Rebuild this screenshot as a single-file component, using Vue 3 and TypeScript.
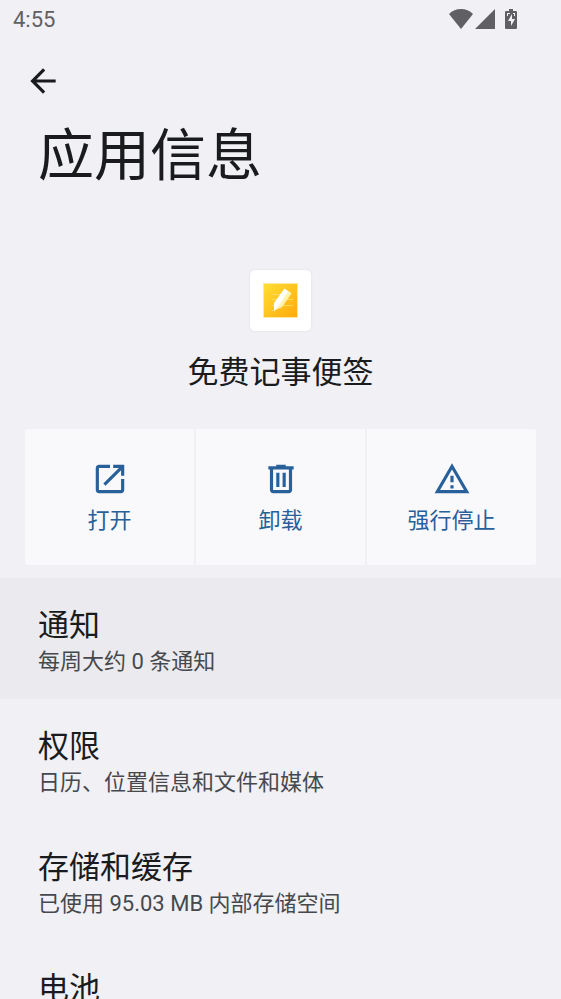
<script setup lang="ts">
interface Action {
  id: string
  label: string
  path: string
}

interface Entry {
  title: string
  summary?: string
  pressed?: boolean
}

const actions: Action[] = [
  {
    id: 'open',
    label: '打开',
    path: 'M19 19H5V5h7V3H5c-1.1 0-2 .9-2 2v14c0 1.1.9 2 2 2h14c1.1 0 2-.9 2-2v-7h-2v7zM14 3v2h3.59l-9.83 9.83 1.41 1.41L19 6.41V10h2V3h-7z',
  },
  {
    id: 'uninstall',
    label: '卸载',
    path: 'M15 4V3H9v1H4v2h1v13c0 1.1.9 2 2 2h10c1.1 0 2-.9 2-2V6h1V4h-5zm2 15H7V6h10v13zM9 8h2v9H9zm4 0h2v9h-2z',
  },
  {
    id: 'stop',
    label: '强行停止',
    path: 'M12 5.99L19.53 19H4.47L12 5.99M12 2L1 21h22L12 2zm1 14h-2v2h2v-2zm0-6h-2v4h2v-4z',
  },
]

const entries: Entry[] = [
  { title: '通知', summary: '每周大约 0 条通知', pressed: true },
  { title: '权限', summary: '日历、位置信息和文件和媒体' },
  { title: '存储和缓存', summary: '已使用 95.03 MB 内部存储空间' },
  { title: '电池' },
]
</script>

<template>
  <div class="screen">
    <div class="status">
      <span>4:55</span>
      <div class="status-icons">
        <svg class="wifi" viewBox="0 0 24 20" aria-hidden="true">
          <path d="M12 20 0 5Q5 0 12 0t12 5z" />
        </svg>
        <svg class="signal" viewBox="0 0 20 20" aria-hidden="true"><path d="M20 0v20H0z" /></svg>
        <svg class="battery" viewBox="0 0 12 20" aria-hidden="true">
          <path fill-rule="evenodd" d="M4 0h4v2h3q1 0 1 1v16q0 1-1 1H1q-1 0-1-1V3q0-1 1-1h3zM7 5 3 12h3v5l4-7H7zM2 4v3h1V5h2V4zm6 0v1h1v2h1V4z" />
        </svg>
      </div>
    </div>

    <header>
      <button class="back" type="button" aria-label="返回">
        <svg class="icon" viewBox="0 0 24 24" aria-hidden="true">
          <path d="M20 11H7.83l5.59-5.59L12 4l-8 8 8 8 1.41-1.41L7.83 13H20v-2z" />
        </svg>
      </button>
      <h1>应用信息</h1>
    </header>

    <main>
      <section class="app">
        <div class="app-icon">
          <svg viewBox="0 0 35 35" aria-hidden="true">
            <defs>
              <linearGradient id="note" x1="0" y1="0" x2="1" y2="1">
                <stop offset="0" stop-color="#ffdf32" />
                <stop offset="1" stop-color="#ffa90d" />
              </linearGradient>
            </defs>
            <rect width="35" height="35" fill="#ffe9a0" />
            <rect x="1" y="1" width="33" height="33" fill="url(#note)" />
            <path d="M9 11.500h15M9 16.500h21M9 22.500h21M9 27.500h3" stroke="#ffdc60" />
            <path d="M5 11.500h2M5 16.500h2M5 22.500h2M5 27.500h2" stroke="#ffc51c" />
            <path d="M21.500 5.500 28 10 18.500 24 11 27.500V20z" fill="#fff" />
            <path d="m25 8.500 3.500 2L19 24l-8 3.500 5-5z" fill="#fff2ad" />
          </svg>
        </div>
        <h2>免费记事便签</h2>
      </section>

      <div class="actions">
        <button v-for="action in actions" :key="action.id" type="button">
          <svg class="icon" viewBox="0 0 24 24" aria-hidden="true"><path :d="action.path" /></svg>
          <span>{{ action.label }}</span>
        </button>
      </div>

      <div class="entries">
        <button
          v-for="entry in entries"
          :key="entry.title"
          type="button"
          :class="{ pressed: entry.pressed }"
        >
          <span class="title">{{ entry.title }}</span>
          <span v-if="entry.summary" class="summary">{{ entry.summary }}</span>
        </button>
      </div>
    </main>
  </div>
</template>

<style>
body {
  background: #f0f0f5;
}
</style>

<style scoped>
.screen {
  display: flex;
  flex-direction: column;
  height: 100vh;
  overflow: hidden;
  background: #f0f0f5;
  color: #1a1b1c;
  font-family: Roboto, "Noto Sans CJK SC", sans-serif;
}

button {
  border: 0;
  padding: 0;
  background: transparent;
  color: inherit;
  font: inherit;
  cursor: pointer;
}

h1,
h2 {
  margin: 0;
  font-weight: 400;
}

svg {
  display: block;
  fill: currentColor;
}

.icon {
  width: 38px;
  height: 38px;
}

.status {
  flex: none;
  display: flex;
  justify-content: space-between;
  align-items: center;
  height: 38px;
  padding: 0 44px 0 13px;
  color: #606064;
  font-size: 22px;
}

.status-icons {
  display: flex;
  align-items: center;
}

.wifi {
  width: 24px;
  height: 20px;
  margin-right: 2px;
}

.signal {
  width: 20px;
  height: 20px;
  margin-right: 10px;
}

.battery {
  width: 12px;
  height: 20px;
}

header {
  flex: none;
  padding: 24px 24px 0;
}

.back {
  display: block;
}

h1 {
  padding: 18px 14px 0;
  font-size: 56px;
  line-height: 76px;
}

main {
  flex: 1;
  min-height: 0;
  overflow-y: auto;
  scrollbar-width: none;
}

.app {
  display: flex;
  flex-direction: column;
  align-items: center;
  gap: 21px;
  padding: 76px 24px 35px;
}

.app-icon {
  display: grid;
  place-items: center;
  width: 61px;
  height: 61px;
  border-radius: 5px;
  background: #fff;
  box-shadow: 0 0 3px rgb(0 0 0 / 8%);
}

.app-icon svg {
  width: 35px;
  height: 35px;
}

h2 {
  font-size: 31px;
  line-height: 42px;
}

.actions {
  display: grid;
  grid-template-columns: repeat(3, 1fr);
  gap: 2px;
  margin: 0 25px 13px;
}

.actions button {
  display: flex;
  flex-direction: column;
  align-items: center;
  gap: 9px;
  padding: 31px 0 30px;
  background: #f9f9fc;
  color: #28609a;
  font-size: 22px;
  line-height: 28px;
}

.actions button:first-child {
  border-radius: 3px 0 0 3px;
}

.actions button:last-child {
  border-radius: 0 3px 3px 0;
}

.entries button {
  display: flex;
  flex-direction: column;
  width: 100%;
  padding: 27px 38px 23px;
  text-align: left;
}

.entries .pressed {
  background: #ebebef;
}

.title {
  font-size: 31px;
  line-height: 42px;
}

.summary {
  color: #45494d;
  font-size: 22px;
  line-height: 29px;
}
</style>
